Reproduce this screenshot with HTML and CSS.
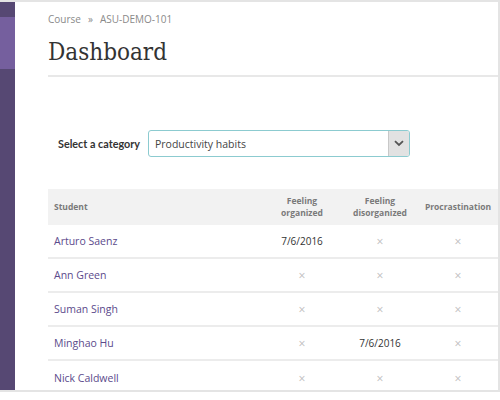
FILE: index.html
```html
<!DOCTYPE html>
<html>
<head>
<meta charset="utf-8">
<link rel="stylesheet" href="styles.css">
</head>
<body>
<div class="frame">
  <div class="sidebar">
    <div class="side-top"></div>
    <div class="side-active"></div>
    <div class="side-rest"></div>
  </div>
  <div class="main">
    <div class="crumbs"><span>Course</span><span class="sep">»</span><span>ASU-DEMO-101</span></div>
    <h1 class="title">Dashboard</h1>
    <div class="rule"></div>
    <div class="category">
      <label class="cat-label">Select a category</label>
      <div class="select">
        <span class="select-text">Productivity habits</span>
        <span class="select-btn">
          <svg width="10" height="7" viewBox="0 0 10 7"><path d="M1 1.2 L5 5 L9 1.2" fill="none" stroke="#555" stroke-width="1.8"/></svg>
        </span>
      </div>
    </div>
    <div class="table">
      <div class="row head">
        <div class="cell name">Student</div>
        <div class="cell">Feeling<br>organized</div>
        <div class="cell">Feeling<br>disorganized</div>
        <div class="cell">Procrastination</div>
      </div>
      <div class="row">
        <div class="cell name"><a>Arturo Saenz</a></div>
        <div class="cell date">7/6/2016</div>
        <div class="cell x">×</div>
        <div class="cell x">×</div>
      </div>
      <div class="row">
        <div class="cell name"><a>Ann Green</a></div>
        <div class="cell x">×</div>
        <div class="cell x">×</div>
        <div class="cell x">×</div>
      </div>
      <div class="row">
        <div class="cell name"><a>Suman Singh</a></div>
        <div class="cell x">×</div>
        <div class="cell x">×</div>
        <div class="cell x">×</div>
      </div>
      <div class="row">
        <div class="cell name"><a>Minghao Hu</a></div>
        <div class="cell x">×</div>
        <div class="cell date">7/6/2016</div>
        <div class="cell x">×</div>
      </div>
      <div class="row last">
        <div class="cell name"><a>Nick Caldwell</a></div>
        <div class="cell x">×</div>
        <div class="cell x">×</div>
        <div class="cell x">×</div>
      </div>
    </div>
  </div>
</div>
</body>
</html>
```
FILE: styles.css
```css
* { box-sizing: border-box; }
html, body { margin: 0; padding: 0; background: #fff; }
body { width: 500px; height: 400px; overflow: hidden; font-family: "Open Sans", "Lato", sans-serif; }
.frame {
  display: flex;
  width: 500px;
  height: 392px;
  border-top: 2px solid #e4e4e4;
  border-right: 2px solid #e4e4e4;
  border-bottom: 2px solid #e4e4e4;
  overflow: hidden;
}
.sidebar { width: 15px; flex: none; display: flex; flex-direction: column; }
.side-top { height: 15px; background: #564873; }
.side-active { height: 52px; background: #755f9e; }
.side-rest { flex: 1; background: #564873; }
.main { flex: 1; padding-left: 33px; min-width: 0; }
.crumbs { margin-top: 10px; font-size: 10px; color: #8a8a8a; height: 14px; display: flex; gap: 7px; align-items: center; }
.title {
  margin: 11px 0 0 0;
  font-family: "DejaVu Serif Condensed", "DejaVu Serif", serif;
  font-stretch: condensed;
  font-weight: normal;
  font-size: 24px;
  color: #333;
  height: 38px;
  line-height: 30px;
}
.rule { border-top: 2px solid #e8e8e8; }
.category { display: flex; align-items: center; margin-top: 53px; padding-left: 10px; }
.cat-label { font-family: "Lato", "Open Sans", sans-serif; font-size: 10.8px; font-weight: bold; color: #333; width: 90px; }
.select {
  width: 262px;
  height: 27px;
  border: 1.5px solid #8ccbd0;
  border-radius: 3px;
  display: flex;
  align-items: stretch;
  overflow: hidden;
}
.select-text { flex: 1; font-size: 10.5px; color: #444; padding-left: 6px; display: flex; align-items: center; }
.select-btn { width: 21px; background: #e2e2e2; border-left: 1px solid #c8c8c8; display: flex; align-items: center; justify-content: center; }
.table { margin-top: 32px; }
.row { display: grid; grid-template-columns: 215px 78px 78px 78px; height: 34px; border-bottom: 2px solid #ececec; align-items: center; }
.row.head { height: 36px; background: #f2f2f2; border-bottom: none; }
.row.last { border-bottom: none; }
.cell { text-align: center; font-size: 10px; color: #333; }
.cell.name { text-align: left; padding-left: 6px; font-size: 10.5px; }
.head .cell { font-size: 8.5px; font-weight: bold; color: #7a7a7a; line-height: 12px; }
.head .cell.name { font-size: 8.5px; }
.cell a { color: #5b4a8b; }
.cell.x { color: #bdbdbd; font-size: 12px; }
```
